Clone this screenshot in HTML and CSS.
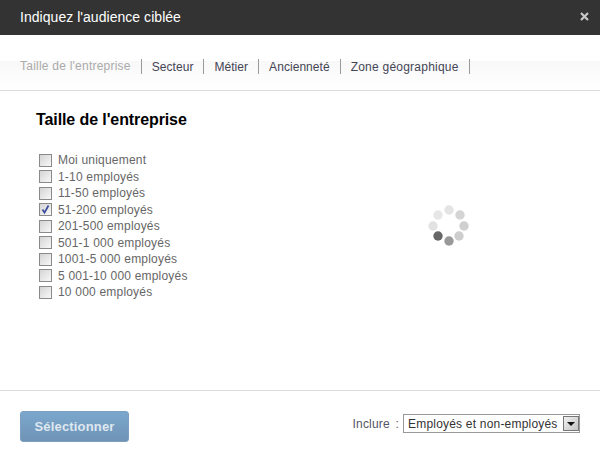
FILE: index.html

```html
<!DOCTYPE html>
<html lang="fr">
<head>
    <meta charset="UTF-8">
    <title>Indiquez l'audience ciblée</title>
    <link rel="stylesheet" href="styles.css">
</head>
<body>
    <div class="dialog">
        <header class="titlebar">
            <span class="title">Indiquez l'audience ciblée</span>
            <svg class="close" width="9" height="9" viewBox="0 0 9 9"><path d="M1 1l7 7M8 1l-7 7" stroke="#c8c8c8" stroke-width="2.2" fill="none"/></svg>
        </header>
        <nav class="tabs">
            <span class="tab tab-active">Taille de l'entreprise</span>
            <span class="tab">Secteur</span>
            <span class="tab">Métier</span>
            <span class="tab">Ancienneté</span>
            <span class="tab tab-wide">Zone géographique</span>
        </nav>
        <main class="content">
            <section class="sizes">
                <h2>Taille de l'entreprise</h2>
                <ul class="checklist">
                    <li><span class="box"></span>Moi uniquement</li>
                    <li><span class="box"></span>1-10 employés</li>
                    <li><span class="box"></span>11-50 employés</li>
                    <li><span class="box"><svg width="11" height="11" viewBox="0 0 11 11"><path d="M2.5 5.500l2 3.200L8.500 1.500" stroke="#3a4a9a" stroke-width="1.700" fill="none"/></svg></span>51-200 employés</li>
                    <li><span class="box"></span>201-500 employés</li>
                    <li><span class="box"></span>501-1 000 employés</li>
                    <li><span class="box"></span>1001-5 000 employés</li>
                    <li><span class="box"></span>5 001-10 000 employés</li>
                    <li><span class="box"></span>10 000 employés</li>
                </ul>
            </section>
            <svg class="spinner" width="42" height="42" viewBox="0 0 42 42">
                <circle cx="21" cy="5" r="4.700" fill="#e4e4e4"/>
                <circle cx="32" cy="10" r="4.700" fill="#d4d4d4"/>
                <circle cx="36" cy="21" r="4.700" fill="#cfcfcf"/>
                <circle cx="31" cy="31" r="4.700" fill="#cdcdcd"/>
                <circle cx="21" cy="36" r="4.700" fill="#999999"/>
                <circle cx="10" cy="31" r="4.700" fill="#666666"/>
                <circle cx="5" cy="21" r="4.700" fill="#e2e2e2"/>
                <circle cx="10" cy="10" r="4.700" fill="#e6e6e6"/>
            </svg>
        </main>
        <footer class="actions">
            <button class="select-btn" type="button">Sélectionner</button>
            <div class="include">
                <span class="include-label">Inclure :</span>
                <div class="dropdown">
                    <span class="dropdown-value">Employés et non-employés</span>
                    <span class="dropdown-arrow"></span>
                </div>
            </div>
        </footer>
    </div>
</body>
</html>
```

FILE: styles.css

```css
* {
    box-sizing: border-box;
}
body {
    margin: 0;
    background: #ffffff;
    font-family: "Liberation Sans", Arial, sans-serif;
    color: #666666;
}
.dialog {
    width: 600px;
    height: 462px;
    display: flex;
    flex-direction: column;
    overflow: hidden;
}
.titlebar {
    height: 35px;
    flex: none;
    background: #333333;
    display: flex;
    align-items: center;
    justify-content: space-between;
    padding: 0 11px 3px 20px;
}
.title {
    color: #ffffff;
    font-size: 14px;
    letter-spacing: 0.04px;
    margin-top: 2px;
}
.tabs {
    height: 56px;
    flex: none;
    padding: 24px 0 0 20px;
    background: linear-gradient(#ffffff 0, #ffffff 26px, #f8f8f8 26px, #ffffff 54px);
    border-bottom: 1px solid #dddddd;
    display: flex;
    align-items: flex-start;
    font-size: 12px;
    letter-spacing: 0.05px;
    color: #444455;
}
.tab {
    height: 15px;
    line-height: 15px;
    padding: 1px 10px 0 0;
    margin-right: 10px;
    border-right: 1px solid #999999;
}
.tab-active {
    color: #aaaaaa;
    padding-top: 0;
    letter-spacing: 0.23px;
}
.tab-wide {
    letter-spacing: 0.23px;
}
.content {
    flex: 1;
    display: flex;
    position: relative;
    min-height: 0;
}
.sizes {
    padding: 20px 0 0 36px;
}
h2 {
    margin: 0 0 23px;
    font-size: 16px;
    line-height: 18px;
    letter-spacing: -0.1px;
    color: #000000;
}
.checklist {
    list-style: none;
    margin: 0 0 0 3px;
    padding: 0;
    font-size: 12px;
    letter-spacing: 0.2px;
}
.checklist li {
    height: 16.500px;
    display: flex;
    align-items: center;
    gap: 6px;
}
.box {
    width: 13px;
    height: 13px;
    border: 1px solid #8a8a8a;
    outline: 1px solid #ffffff;
    background: linear-gradient(135deg, #d4d4d4, #f8f8f8);
    display: flex;
    flex: none;
}
.spinner {
    position: absolute;
    left: 428px;
    top: 114px;
}
.actions {
    height: 72px;
    flex: none;
    border-top: 1px solid #dddddd;
    display: flex;
    align-items: flex-start;
    justify-content: space-between;
    padding: 20px 20px 0;
}
.select-btn {
    width: 109px;
    height: 31px;
    border: 1px solid #7da0c0;
    border-radius: 3px;
    background: linear-gradient(#7ba7cd, #6f93b5);
    color: #dfe8f0;
    font-family: inherit;
    font-size: 13px;
    font-weight: bold;
    letter-spacing: 0.17px;
    padding: 0;
}
.include {
    display: flex;
    align-items: center;
    gap: 4px;
    font-size: 12px;
    letter-spacing: 0.2px;
    margin-top: 3px;
}
.include-label {
    color: #555566;
    word-spacing: 2px;
}
.dropdown {
    width: 177px;
    height: 19px;
    border: 1px solid #999999;
    display: flex;
    align-items: center;
    justify-content: space-between;
    padding: 0 0 0 4px;
    color: #333333;
}
.dropdown-arrow {
    width: 16px;
    height: 15px;
    border: 1px solid #777777;
    background: linear-gradient(135deg, #f0f0f0, #c4c4c4);
    position: relative;
}
.dropdown-arrow::after {
    content: "";
    position: absolute;
    left: 3px;
    top: 5px;
    border: 4px solid transparent;
    border-top-color: #111111;
    border-bottom: 0;
}
```
